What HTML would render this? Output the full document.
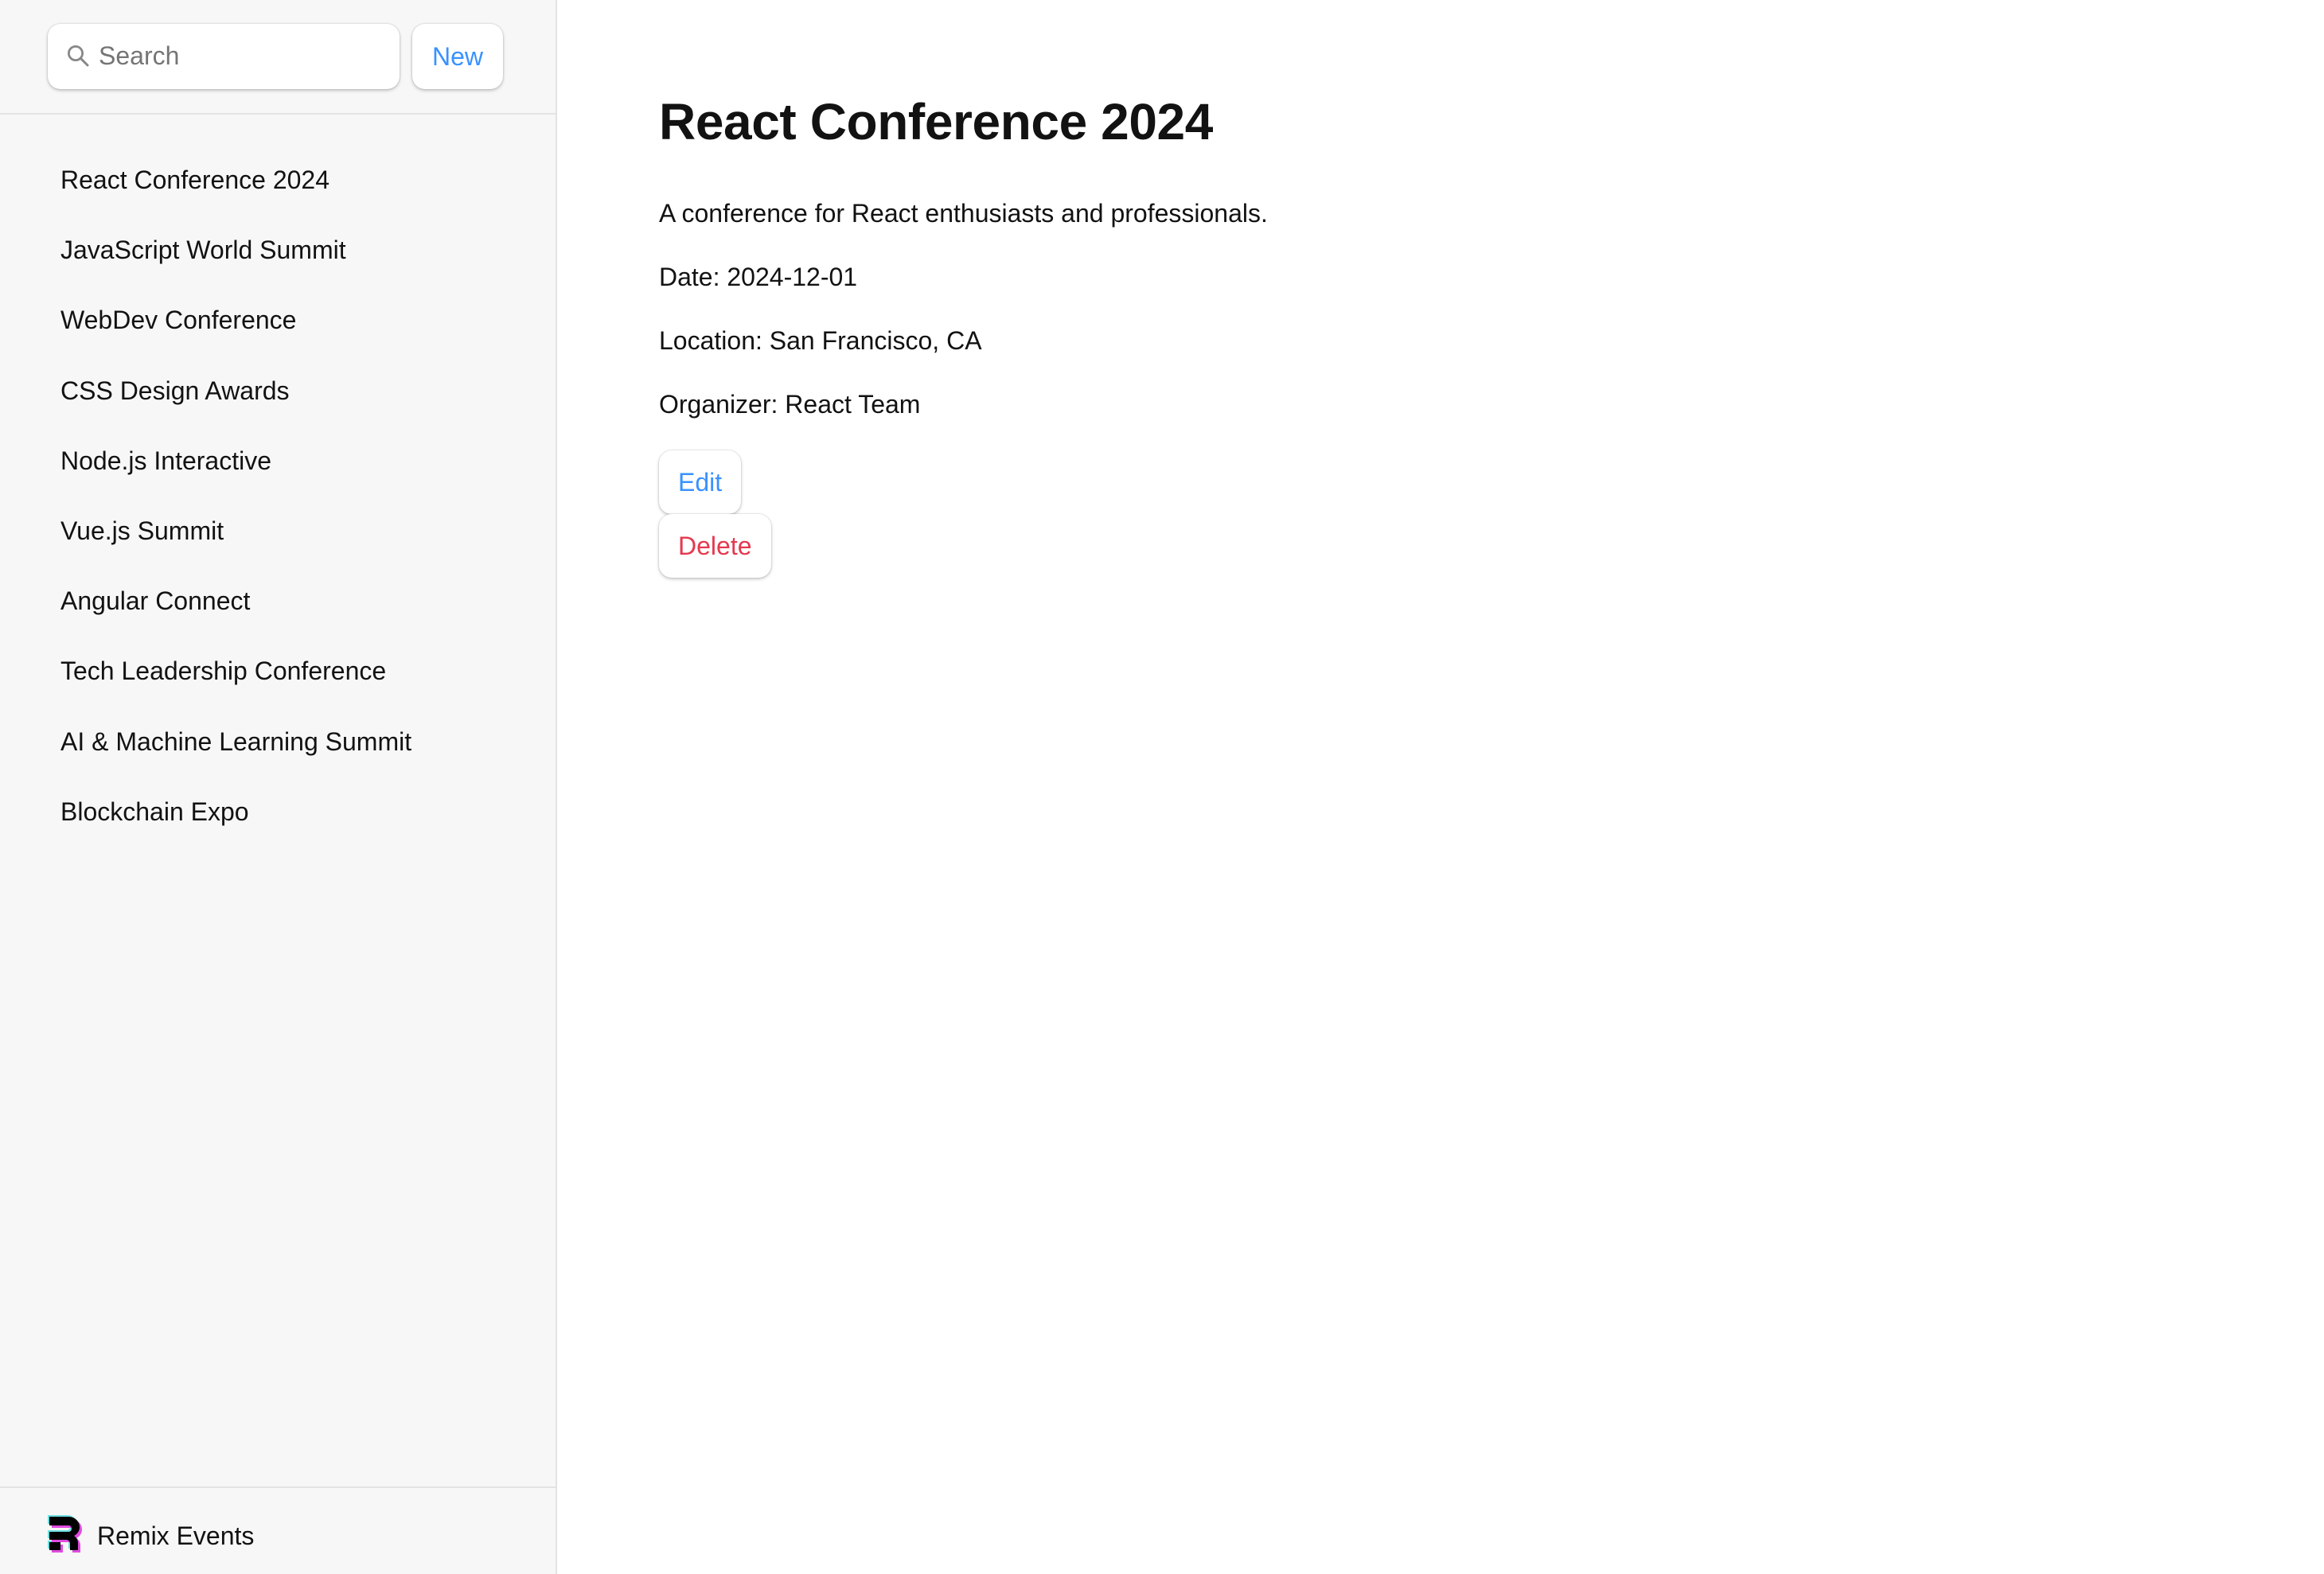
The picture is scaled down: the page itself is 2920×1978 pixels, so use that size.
<!DOCTYPE html>
<html><head><meta charset="utf-8"><style>
html{zoom:2}
*{box-sizing:border-box;margin:0;padding:0}
body{width:1460px;height:989px;overflow:hidden;font-family:"Liberation Sans",sans-serif;color:#121212;background:#fff;position:relative}
#side{position:absolute;left:0;top:0;width:350px;height:989px;background:#f7f7f7;border-right:1px solid #e3e3e3}
.search{position:absolute;left:30px;top:15px;width:221px;height:41px;background:#fff;border-radius:8px;box-shadow:0 0 1px rgba(0,0,0,.2),0 1px 2px rgba(0,0,0,.2)}
.search span{position:absolute;left:32px;top:11px;font-size:16px;color:#757575}
.search svg{position:absolute;left:12px;top:13px}
.new{position:absolute;left:259px;top:15px;width:57px;height:41px;background:#fff;border-radius:8px;box-shadow:0 0 1px rgba(0,0,0,.2),0 1px 2px rgba(0,0,0,.2);color:#3992ff;font-size:16px;text-align:center;line-height:41px}
.div1{position:absolute;left:0;top:71px;width:349px;border-top:1px solid #e3e3e3}
ul{list-style:none;position:absolute;left:38px;top:91px}
li{height:44.1px;line-height:44.1px;font-size:16px}
.foot{position:absolute;left:0;top:934px;width:349px;border-top:1px solid #e3e3e3;height:55px}
.foot svg{position:absolute;left:29px;top:16px}
.foot span{position:absolute;left:61px;top:21px;font-size:16px}
#main{position:absolute;left:414px;top:0}
h1{position:absolute;top:58px;font-size:32px;font-weight:bold;white-space:nowrap;letter-spacing:-.2px}
p{position:absolute;font-size:16px;white-space:nowrap}
.btn{position:absolute;background:#fff;border-radius:8px;box-shadow:0 0 1px rgba(0,0,0,.2),0 1px 2px rgba(0,0,0,.2);font-size:16px;padding:0 12px;height:40px;line-height:40px}
</style></head><body>
<div id="side">
 <div class="search"><svg width="14" height="14" viewBox="0 0 14 14"><circle cx="5.5" cy="5.5" r="4.3" fill="none" stroke="#888" stroke-width="1.4"/><path d="M8.6 8.6L13 13" stroke="#888" stroke-width="1.5" stroke-linecap="round"/></svg><span>Search</span></div>
 <div class="new">New</div>
 <div class="div1"></div>
 <ul>
  <li>React Conference 2024</li><li>JavaScript World Summit</li><li>WebDev Conference</li><li>CSS Design Awards</li><li>Node.js Interactive</li><li>Vue.js Summit</li><li>Angular Connect</li><li>Tech Leadership Conference</li><li>AI &amp; Machine Learning Summit</li><li>Blockchain Expo</li>
 </ul>
 <div class="foot">
  <svg width="26" height="26" viewBox="0 0 26 26">
   <g fill="#6ee0e0" transform="translate(-1,-1)"><path d="M2 2h12c4 0 7 3 7 6.5c0 2.5-1.5 4.5-3.5 5.5c1.5 1 2.5 2.5 2.5 4.5V23h-5v-4c0-1.5-1-2.5-2.5-2.5H2v-5h12c1.2 0 2-.8 2-2s-.8-2-2-2H2z"/><path d="M2 18h7v5H2z"/></g>
   <g fill="#e04be0" transform="translate(1.5,1.5)"><path d="M2 2h12c4 0 7 3 7 6.5c0 2.5-1.5 4.5-3.5 5.5c1.5 1 2.5 2.5 2.5 4.5V23h-5v-4c0-1.5-1-2.5-2.5-2.5H2v-5h12c1.2 0 2-.8 2-2s-.8-2-2-2H2z"/><path d="M2 18h7v5H2z"/></g>
   <g fill="#000"><path d="M2 2h12c4 0 7 3 7 6.5c0 2.5-1.5 4.5-3.5 5.5c1.5 1 2.5 2.5 2.5 4.5V23h-5v-4c0-1.5-1-2.5-2.5-2.5H2v-5h12c1.2 0 2-.8 2-2s-.8-2-2-2H2z"/><path d="M2 18h7v5H2z"/></g>
  </svg>
  <span>Remix Events</span>
 </div>
</div>
<div id="main">
 <h1>React Conference 2024</h1>
 <p style="top:125px">A conference for React enthusiasts and professionals.</p>
 <p style="top:165px">Date: 2024-12-01</p>
 <p style="top:205px">Location: San Francisco, CA</p>
 <p style="top:245px">Organizer: React Team</p>
 <div class="btn" style="top:283px;color:#3992ff">Edit</div>
 <div class="btn" style="top:323px;color:#e5384e">Delete</div>
</div>
</body></html>
